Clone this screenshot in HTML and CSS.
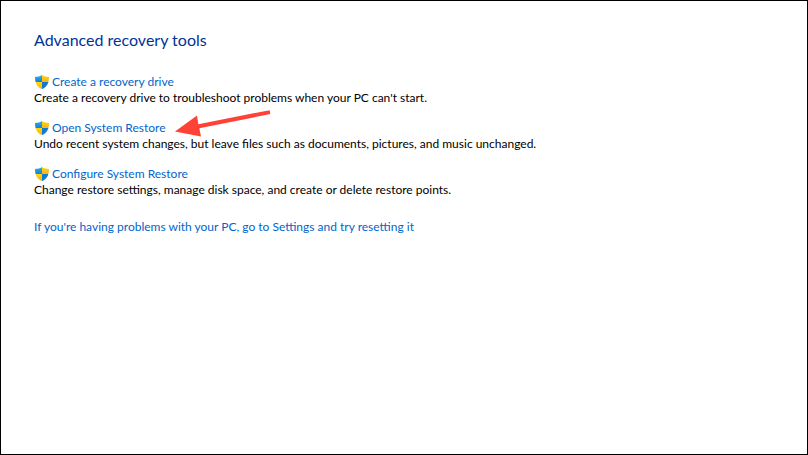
FILE: index.html
```
<!DOCTYPE html>
<html lang="en">
<head>
    <meta charset="UTF-8">
    <meta name="viewport" content="width=device-width, initial-scale=1.0">
    <title>Recovery</title>

    <link rel="stylesheet" href="styles.css">

</head>
<body>

    <!-- shield drawn once, reused by every tool -->
    <svg class="defs" width="0" height="0" aria-hidden="true">
        <defs>
            <clipPath id="shield-shape">
                <path d="M7 0C5 1.4 2.6 1.9 0 2C0 7.5 1.6 12 7 14C12.4 12 14 7.5 14 2C11.4 1.9 9 1.4 7 0Z"/>
            </clipPath>
            <linearGradient id="blue" x1="0" y1="0" x2="0" y2="1">
                <stop offset="0" stop-color="#2fb0ee"/>
                <stop offset="1" stop-color="#1580d2"/>
            </linearGradient>
            <linearGradient id="yellow" x1="0" y1="0" x2="0" y2="1">
                <stop offset="0" stop-color="#ffd800"/>
                <stop offset="1" stop-color="#f5b024"/>
            </linearGradient>
        </defs>
        <symbol id="shield" viewBox="0 0 14 14">
            <g clip-path="url(#shield-shape)">
                <rect x="0" y="0" width="7" height="7" fill="url(#blue)"/>
                <rect x="7" y="0" width="7" height="7" fill="url(#yellow)"/>
                <rect x="0" y="7" width="7" height="7" fill="url(#yellow)"/>
                <rect x="7" y="7" width="7" height="7" fill="#1279ce"/>
            </g>
        </symbol>
    </svg>

    <main class="recovery">
        <h1>Advanced recovery tools</h1>

        <ul class="tools">
            <li class="tool">
                <a href="#"><svg class="shield"><use href="#shield"/></svg>Create a recovery drive</a>
                <p>Create a recovery drive to troubleshoot problems when your PC can't start.</p>
            </li>
            <li class="tool">
                <a href="#"><svg class="shield"><use href="#shield"/></svg>Open System Restore</a>
                <p>Undo recent system changes, but leave files such as documents, pictures, and music unchanged.</p>
                <svg class="arrow" viewBox="0 0 96 28" aria-hidden="true">
                    <path d="M0 21.5L22 5.5L23.3 14.2L94.6 0.2L95.4 4L24.3 18.2L26 26.5Z" fill="#ff4136"/>
                </svg>
            </li>
            <li class="tool">
                <a href="#"><svg class="shield"><use href="#shield"/></svg>Configure System Restore</a>
                <p>Change restore settings, manage disk space, and create or delete restore points.</p>
            </li>
        </ul>

        <a class="reset" href="#">If you're having problems with your PC, go to Settings and try resetting it</a>
    </main>

</body>
</html>
```
FILE: styles.css
```
* {
    box-sizing: border-box;
}

body {
    margin: 0;
    background: white;
    font-family: Lato, "Open Sans", sans-serif;
    font-size: 12px;
    line-height: 16px;
    color: black;
}

.defs {
    position: absolute;
}

.recovery {
    min-height: 100vh;
    border: 1px solid black;
    padding: 28px 33px;
}

h1 {
    margin: 0 0 23px;
    font-size: 16px;
    font-weight: normal;
    line-height: 22px;
    color: #003399;
}

a {
    color: #0066cc;
    text-decoration: none;
}

a:hover {
    text-decoration: underline;
}

p {
    margin: 0;
}

/* Tools list */
.tools {
    list-style: none;
    margin: 0 0 21px;
    padding: 0;
}

.tool {
    position: relative;
    margin-bottom: 14px;
}

.tool a {
    display: inline-flex;
    align-items: center;
    gap: 3px;
    padding-left: 1px;
    vertical-align: top;
}

.shield {
    width: 14px;
    height: 14px;
}

/* Red pointer over the restore link */
.arrow {
    position: absolute;
    left: 141px;
    top: -10px;
    width: 96px;
    height: 28px;
}
```
